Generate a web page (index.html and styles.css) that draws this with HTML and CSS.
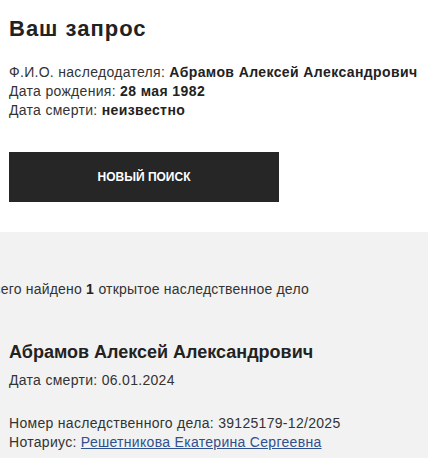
FILE: index.html
```html
<!DOCTYPE html>
<html lang="ru">
<head>
    <meta charset="UTF-8">
    <meta name="viewport" content="width=device-width, initial-scale=1.0">
    <title>Ваш запрос</title>
    <link rel="stylesheet" href="styles.css">
</head>
<body>
    <div class="request">
        <h1>Ваш запрос</h1>
        <div class="request-info">
            <p>Ф.И.О. наследодателя: <b>Абрамов Алексей Александрович</b></p>
            <p>Дата рождения: <b>28 мая 1982</b></p>
            <p>Дата смерти: <b>неизвестно</b></p>
        </div>
        <a href="#" class="search-button">Новый поиск</a>
    </div>

    <div class="results">
        <p class="results-count">Всего найдено <b>1</b> открытое наследственное дело</p>
        <div class="case">
            <h2>Абрамов Алексей Александрович</h2>
            <p>Дата смерти: 06.01.2024</p>
            <div class="case-details">
                <p>Номер наследственного дела: 39125179-12/2025</p>
                <p>Нотариус: <a href="#">Решетникова Екатерина Сергеевна</a></p>
            </div>
        </div>
    </div>
</body>
</html>
```

FILE: styles.css
```css
body {
    font-family: "Liberation Sans", Arial, sans-serif;
    font-size: 14px;
    line-height: 19px;
    letter-spacing: 0.3px;
    color: #333;
    background-color: #f2f2f2;
    margin: 0;
    padding: 0;
    overflow: hidden;
}
p {
    margin: 0;
}
b {
    color: #222;
    letter-spacing: 0.4px;
}
.request {
    background: white;
    padding: 16px 9px 30px;
}
h1 {
    font-size: 22px;
    line-height: 26px;
    font-weight: bold;
    letter-spacing: 1px;
    color: #222;
    margin: 0 0 21px;
}
.request-info p {
    white-space: nowrap;
}
.search-button {
    display: flex;
    justify-content: center;
    align-items: center;
    width: 270px;
    height: 50px;
    margin-top: 32px;
    background-color: #262626;
    color: white;
    font-size: 12px;
    font-weight: bold;
    letter-spacing: 0;
    text-transform: uppercase;
    text-decoration: none;
}
.results {
    padding: 48px 9px 20px;
}
.results-count {
    margin-left: -25px;
    letter-spacing: 0.2px;
    white-space: nowrap;
}
.case {
    margin-top: 42px;
}
.case h2 {
    font-size: 18px;
    line-height: 22px;
    font-weight: bold;
    letter-spacing: 0;
    color: #222;
    margin: 0 0 8px;
}
.case-details {
    margin-top: 24px;
}
.case-details p {
    white-space: nowrap;
}
.case-details a {
    color: #2f4f8f;
    text-decoration: underline;
}
```
